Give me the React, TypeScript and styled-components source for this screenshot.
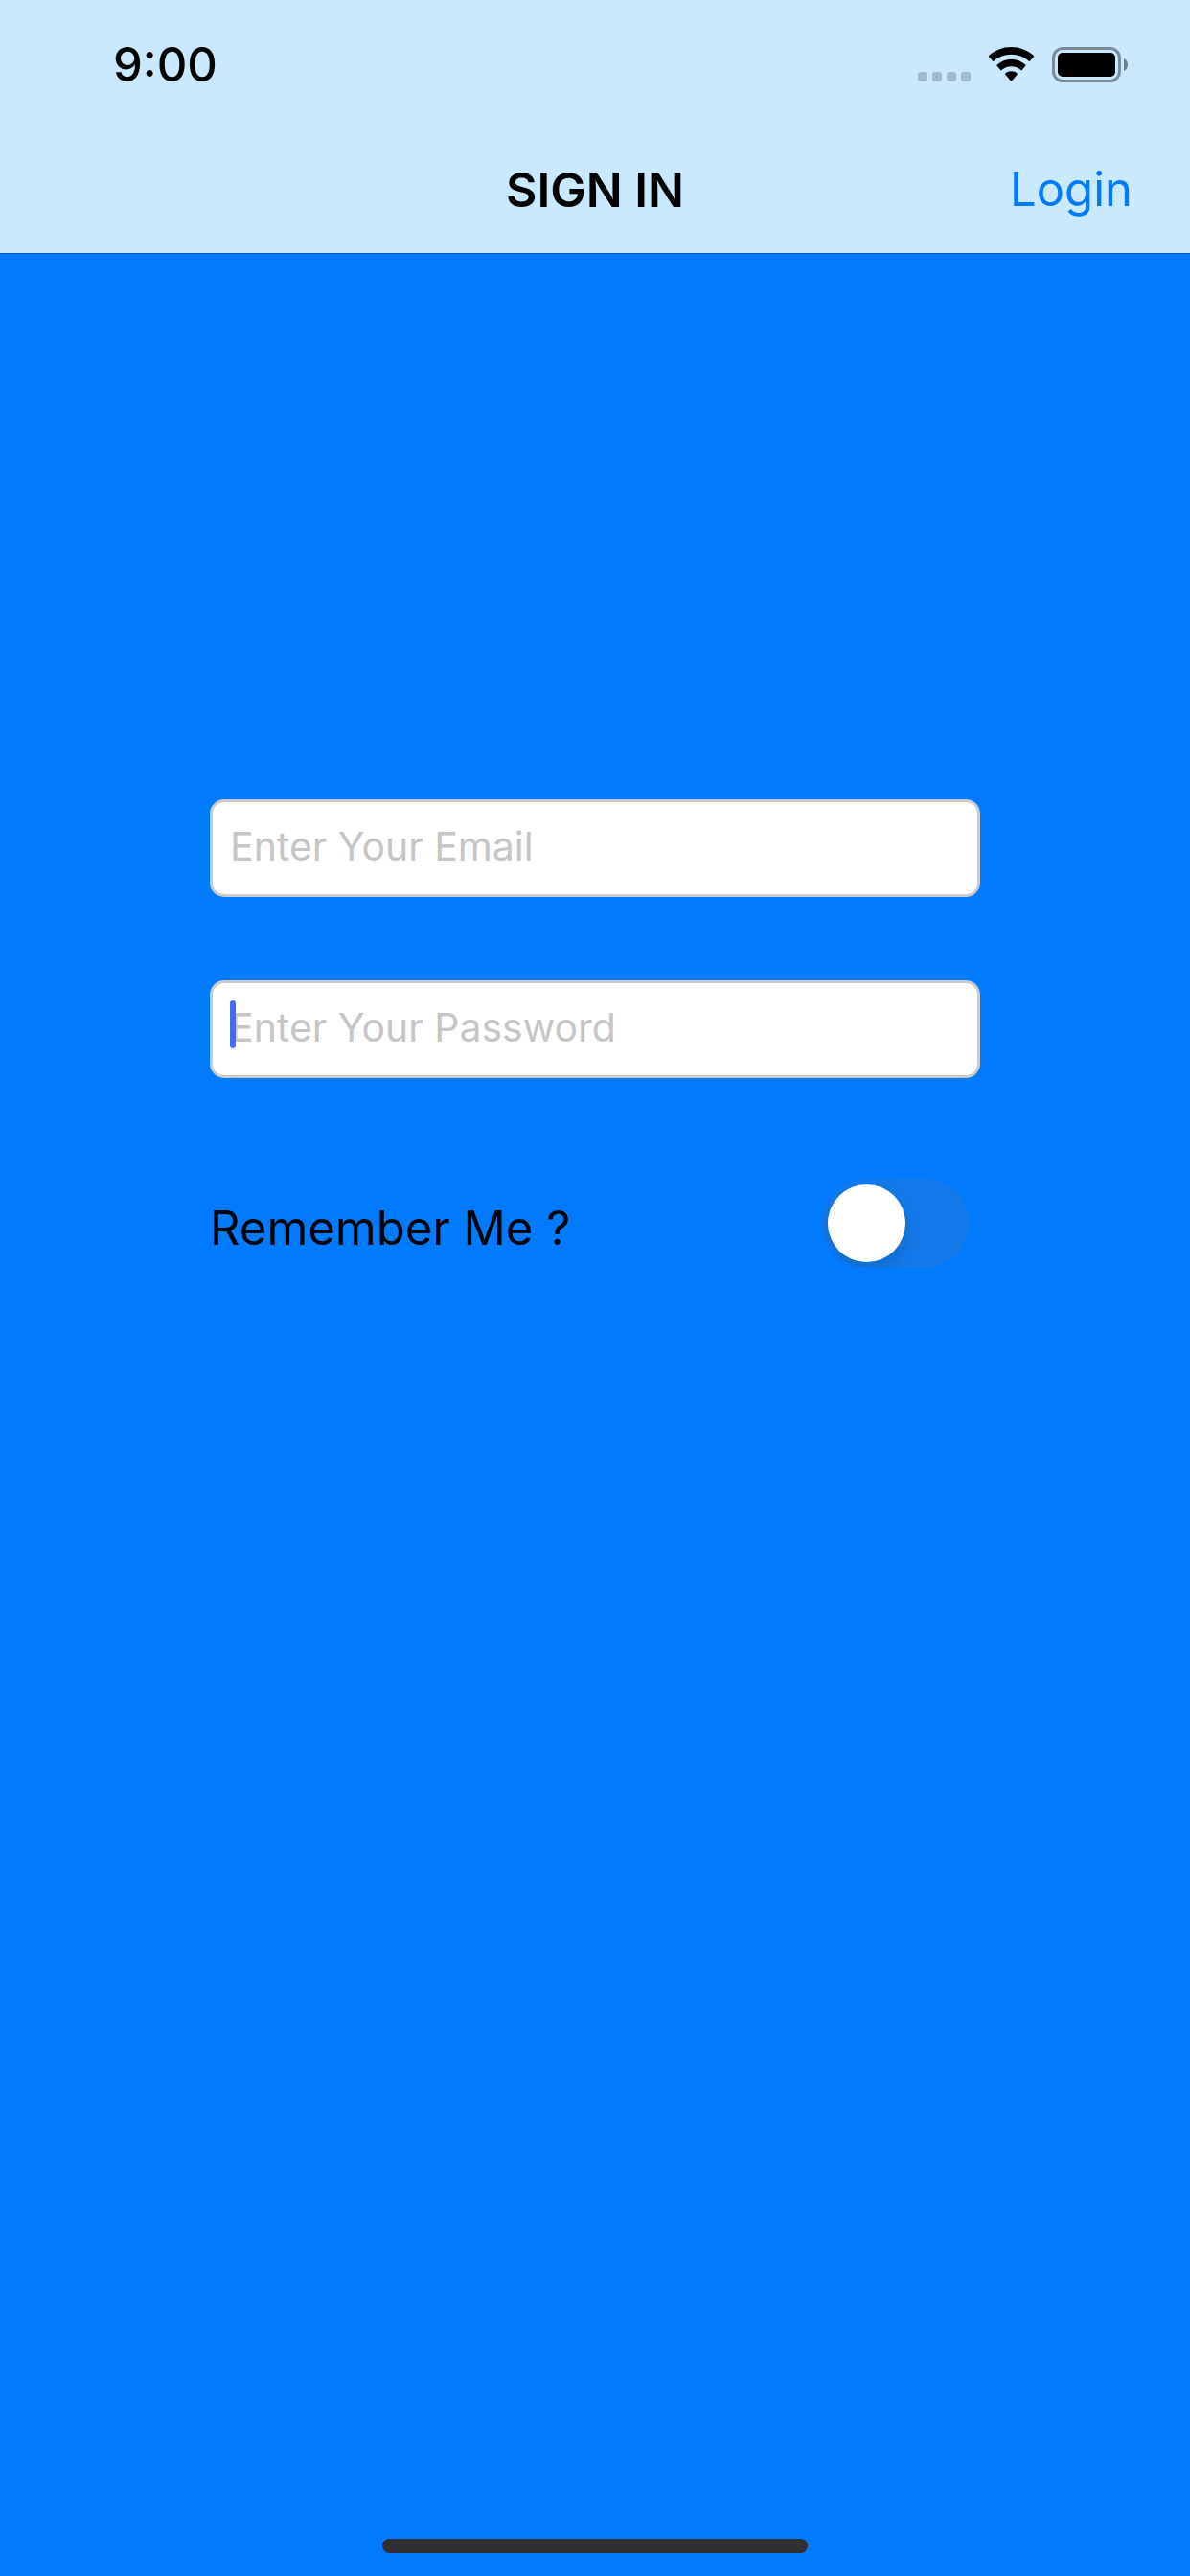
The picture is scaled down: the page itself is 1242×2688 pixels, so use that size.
import React, { useState } from "react";
import styled, { createGlobalStyle } from "styled-components";

const GlobalStyle = createGlobalStyle`
  *, *::before, *::after {
    box-sizing: border-box;
  }
  body {
    margin: 0;
    background: #007aff;
    font-family: Inter, "Liberation Sans", sans-serif;
    color: #000;
  }
`;

const Screen = styled.div`
  display: flex;
  flex-direction: column;
  min-height: 100vh;
  background: #007aff;
`;

const Header = styled.header`
  background: #c9e9ff;
  border-bottom: 1px solid #0b5cad;
`;

const StatusBar = styled.div`
  display: flex;
  align-items: center;
  justify-content: space-between;
  height: 132px;
  padding: 4px 65px 0 118px;
`;

const Time = styled.time`
  font-size: 49px;
  line-height: 60px;
  font-weight: 500;
`;

const StatusIcons = styled.div`
  display: flex;
  align-items: center;
  gap: 18px;

  svg {
    display: block;
  }
`;

const NavBar = styled.nav`
  display: grid;
  grid-template-columns: 1fr auto 1fr;
  align-items: center;
  height: 132px;
  padding: 0 60px;
`;

const Title = styled.h1`
  grid-column: 2;
  margin: 0;
  font-size: 50px;
  line-height: 60px;
  font-weight: 600;
`;

const NavButton = styled.button`
  justify-self: end;
  padding: 0;
  border: 0;
  background: none;
  color: #007aff;
  font: 400 49px/60px Inter, "Liberation Sans", sans-serif;
  cursor: pointer;
`;

const Form = styled.form`
  flex: 1;
  display: flex;
  flex-direction: column;
  gap: 87px;
  width: 100%;
  max-width: 804px;
  margin: 0 auto;
  padding-top: 569px;
`;

const Field = styled.div`
  position: relative;
`;

const TextInput = styled.input`
  display: block;
  width: 100%;
  height: 102px;
  padding: 0 18px 4px;
  border: 3px solid #cccccc;
  border-radius: 15px;
  outline: none;
  background: #fff;
  color: #000;
  font: 400 41px/50px Inter, "Liberation Sans", sans-serif;

  &::placeholder {
    color: #c5c5c7;
    opacity: 1;
  }
`;

const Caret = styled.span`
  position: absolute;
  top: 21px;
  left: 21px;
  width: 6px;
  height: 50px;
  border-radius: 3px;
  background: #456bef;
`;

const RememberRow = styled.div`
  display: flex;
  align-items: center;
  justify-content: space-between;
  padding: 18px 12px 0 0;
`;

const RememberLabel = styled.label`
  padding-top: 10px;
  font-size: 49px;
  line-height: 60px;
`;

const Switch = styled.input`
  appearance: none;
  display: flex;
  align-items: center;
  width: 153px;
  height: 93px;
  margin: 0;
  padding: 6px;
  border-radius: 47px;
  background: ${(p) => (p.checked ? "#34c759" : "#147aeb")};
  overflow: hidden;
  cursor: pointer;

  &::before {
    content: "";
    width: 81px;
    height: 81px;
    margin-left: ${(p) => (p.checked ? "60px" : "0")};
    border-radius: 50%;
    background: #fff;
    box-shadow: 0 8px 20px rgba(0, 0, 0, 0.15);
  }
`;

const HomeIndicator = styled.div`
  align-self: center;
  width: 444px;
  height: 15px;
  margin-bottom: 24px;
  border-radius: 8px;
  background: #2f2f2f;
`;

const CellularIcon = () => (
  <svg width="55" height="38" viewBox="0 0 55 38" aria-hidden="true">
    {[0, 15, 30, 45].map((x) => (
      <rect key={x} x={x} y="26" width="10" height="10" rx="3" fill="#a1bacc" />
    ))}
  </svg>
);

const WifiIcon = () => (
  <svg width="49" height="38" viewBox="0 0 49 38" aria-hidden="true">
    <path d="M24.5 0C15.6 0 7.3 3.4 1.1 9.1Q.5 9.7 1.1 10.3L4.9 14.6Q5.5 15.2 6.1 14.7A27.5 27.5 0 0 1 42.9 14.7Q43.5 15.2 44.1 14.6L47.9 10.3Q48.5 9.7 47.9 9.1C41.7 3.4 33.4 0 24.5 0Z" />
    <path d="M24.5 12.7C18.9 12.7 13.7 14.9 9.7 18.5Q9.1 19.1 9.7 19.7L13.2 23.9Q13.8 24.5 14.4 24A15.2 15.2 0 0 1 34.6 24Q35.2 24.5 35.8 23.9L39.3 19.7Q39.9 19.1 39.3 18.5C35.3 14.9 30.1 12.7 24.5 12.7Z" />
    <path d="M24.5 25.3C22.1 25.3 20 26.1 18.3 27.5Q17.7 28.1 18.3 28.8L23.9 35.3Q24.5 35.9 25.1 35.3L30.7 28.8Q31.3 28.1 30.7 27.5C29 26.1 26.9 25.3 24.5 25.3Z" />
  </svg>
);

const BatteryIcon = () => (
  <svg width="79" height="38" viewBox="0 0 79 38" aria-hidden="true">
    <rect x="1.5" y="1.5" width="69" height="34" rx="10" fill="none" stroke="#788c99" strokeWidth="3" />
    <rect x="6" y="6" width="60" height="25" rx="5" />
    <path d="M75 12C77.4 13 79 15.5 79 18.5S77.4 24 75 25Z" fill="#6c7f8c" />
  </svg>
);

export default function App() {
  const [remember, setRemember] = useState(false);

  return (
    <>
      <GlobalStyle />
      <Screen>
        <Header>
          <StatusBar>
            <Time>9:00</Time>
            <StatusIcons>
              <CellularIcon />
              <WifiIcon />
              <BatteryIcon />
            </StatusIcons>
          </StatusBar>
          <NavBar>
            <Title>SIGN IN</Title>
            <NavButton type="submit" form="sign-in">
              Login
            </NavButton>
          </NavBar>
        </Header>
        <Form id="sign-in" onSubmit={(e) => e.preventDefault()}>
          <Field>
            <TextInput type="email" aria-label="Email" placeholder="Enter Your Email" />
          </Field>
          <Field>
            <TextInput type="password" aria-label="Password" placeholder="Enter Your Password" />
            <Caret />
          </Field>
          <RememberRow>
            <RememberLabel htmlFor="remember">Remember Me ?</RememberLabel>
            <Switch
              id="remember"
              type="checkbox"
              role="switch"
              checked={remember}
              onChange={(e) => setRemember(e.target.checked)}
            />
          </RememberRow>
        </Form>
        <HomeIndicator />
      </Screen>
    </>
  );
}
